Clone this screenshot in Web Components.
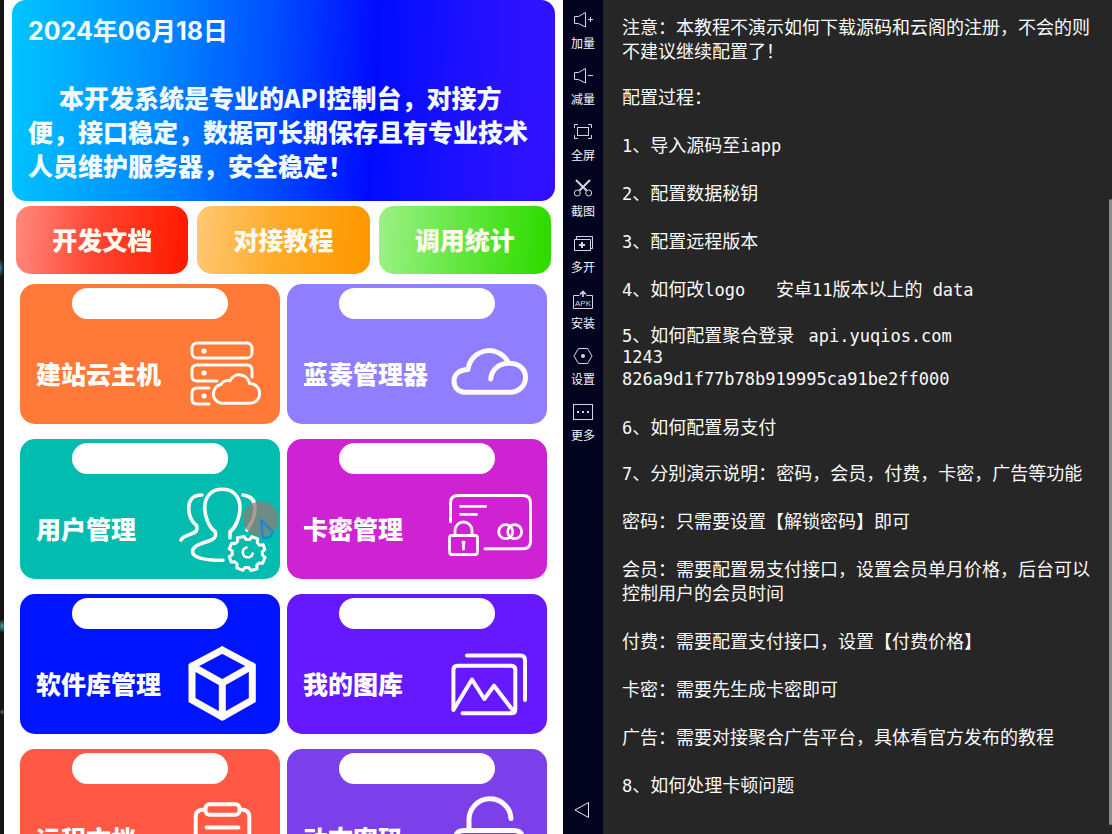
<!DOCTYPE html>
<html lang="zh-CN">
<head>
<meta charset="utf-8">
<meta name="viewport" content="width=device-width, initial-scale=1">
<title>开发控制台</title>
<style>
html, body { margin: 0; height: 100%; overflow: hidden; background: #262626; }
body { font-family: "Noto Sans CJK SC", sans-serif; color: #fff; }
</style>
</head>
<body>
<desk-view>
  <phone-screen slot="phone">
    <notice-banner date="2024年06月18日">本开发系统是专业的API控制台，对接方便，接口稳定，数据可长期保存且有专业技术人员维护服务器，安全稳定！</notice-banner>
    <quick-bar>
      <quick-button style="--from:#ff8a7e;--mid:#ff4634;--to:#ff1c00">开发文档</quick-button>
      <quick-button style="--from:#ffc873;--mid:#ffac2c;--to:#ff9800">对接教程</quick-button>
      <quick-button style="--from:#9bf285;--mid:#66e745;--to:#30dc00">调用统计</quick-button>
    </quick-bar>
    <card-grid>
      <menu-card icon="server" style="--fill:#ff7a38">建站云主机</menu-card>
      <menu-card icon="cloud" style="--fill:#8f7fff">蓝奏管理器</menu-card>
      <menu-card icon="users" style="--fill:#02bcb0">用户管理</menu-card>
      <menu-card icon="card" style="--fill:#cf22d3">卡密管理</menu-card>
      <menu-card icon="cube" style="--fill:#0014ff">软件库管理</menu-card>
      <menu-card icon="gallery" style="--fill:#6619ff">我的图库</menu-card>
      <menu-card icon="clipboard" style="--fill:#ff5845">远程文档</menu-card>
      <menu-card icon="lock" style="--fill:#7b40ea">动态密码</menu-card>
    </card-grid>
  </phone-screen>
  <tool-rail slot="rail">
    <rail-button icon="volup">加量</rail-button>
    <rail-button icon="voldown">减量</rail-button>
    <rail-button icon="full">全屏</rail-button>
    <rail-button icon="cut">截图</rail-button>
    <rail-button icon="multi">多开</rail-button>
    <rail-button icon="apk">安装</rail-button>
    <rail-button icon="set">设置</rail-button>
    <rail-button icon="more">更多</rail-button>
  </tool-rail>
  <note-pane slot="notes"></note-pane>
</desk-view>

<script>
const define = (name, html, setup) => {
  const template = document.createElement('template');
  template.innerHTML = html;
  customElements.define(name, class extends HTMLElement {
    constructor() {
      super();
      this.attachShadow({ mode: 'open' }).append(template.content.cloneNode(true));
    }
    connectedCallback() { if (setup) setup(this, this.shadowRoot); }
  });
};

const cardIcons = {
  server: `<g stroke-width="3"><rect x="13" y="19" width="60" height="15" rx="5"/>
    <path d="M38 57H18q-5 0-5-5v-6q0-5 5-5h50q5 0 5 5v7M30 64H18q-5 0-5 5v6q0 5 5 5h12"/>
    <path d="M42 79.3H71A9.8 9.8 0 0 0 70.5 59.5 A10.3 10.3 0 0 0 51 56.8 A8 8 0 0 0 42 60.5 A9.6 9.6 0 0 0 42 79.3Z"/></g>
    <g class="solid"><circle cx="25" cy="27" r="2.6"/><circle cx="25" cy="49" r="2.6"/><circle cx="25" cy="72" r="2.6"/></g>`,
  cloud: `<path stroke-width="5" d="M19 68.3H64C73 68.3 79.500 61.500 79.500 53.500C79.500 45 73 39.300 63 39.300C53 39.300 45.500 45.500 44.700 55M62.500 39A21.300 21.300 0 0 0 22 45.500C14 45.500 8 50 8 57C8 63.500 12.500 68.300 19 68.300"/>`,
  users: `<g stroke-width="3.6"><path d="M51 59v-6C57 48 61 38 61 29C61 17 54 10.3 43.3 10.3S25.7 17 25.7 29C25.7 38 30 48 36 52.5C38 58 35 60 31 61.5C21 65 13.5 67 13.5 72.5C13.5 77 20 81.3 44 81.3"/>
    <path d="M23 16C13 16 9.7 22 9.7 29C9.7 36 12 42 17.5 46.5C19.5 52 16 53.5 12 55C6 57 3 58.5 2 61M64 16C73 17 76 22 76 29C76 38 73 43 68 51"/></g>
    <g stroke-width="3"><path d="M65.2 57.6l2 3h3.6l2-3 6 2.4-.6 3.6 2.4 2.600 3.600-.4 1.600 4.600-2.600 2.600.3 3.400 2.600 2-2.400 5.800-3.500-.3-2.500 2.400.3 3.600-6 1.600-2.400-3h-3.400l-2.400 2.800-6-2.400.4-3.600-2.400-2.500-3.700.2-1.800-5.200 3-2.300v-3.400l-3-2.300 2.400-5.600 3.700.3 2.400-2.400-.5-3.400z"/>
    <path stroke-width="2.6" d="M67.5 68.5A5 5 0 1 0 73.7 74.5"/></g>
    <circle class="touch" cx="81.7" cy="40" r="17.5"/><path class="cursor" d="M82 41L94 53L91 58L84 59Z"/>`,
  card: `<g stroke-width="2.8"><path stroke-width="3" d="M4.500 42.700V24q0-7.500 7.500-7.500h65q7.500 0 7.500 7.500v38.500q0 7.200-7.500 7.200H39"/>
    <path d="M13.500 27.300H40.700M13.500 35.300H31.700" stroke-linecap="butt"/><rect x="3.500" y="56.500" width="28" height="19" rx="2.500"/>
    <path d="M9 56V51.500a8.500 8.500 0 0 1 17 0V56M17.500 63.500V70"/><circle cx="59.700" cy="52.700" r="7"/><circle cx="68.700" cy="52.700" r="7"/></g>
    <circle class="solid" cx="17.500" cy="63.500" r="2"/>`,
  cube: `<path stroke-width="7" stroke-linejoin="miter" d="M43.300 16L73.300 32V66L43.300 83L13 66V32ZM13 32L43.300 49L73.300 32M43.300 49V83"/>`,
  gallery: `<path stroke-width="4" d="M21 21.500H74.500q4.500 0 4.500 4.500V66M16.500 79.300H65q4.300 0 4.300-4.300V36q0-4.300-4.300-4.300H11.700q-4.300 0-4.300 4.300V76L26 45.500L38.300 65L48 51.700L68.500 78.500"/>`,
  clipboard: `<g stroke-width="4"><rect x="26.500" y="15.300" width="34" height="10.500" rx="4"/>
    <path d="M26 20.500q-9.300 0-9.300 7V95M61 20.500q9.300 0 9.300 7V95M27.500 38.500H59.500"/></g>`,
  lock: `<path stroke-width="5" d="M23 41V32A21 21 0 0 1 65 29.500M18 41.500H68q8.500 0 8.500 8.500V95M18 41.500q-8.500 0-8.500 8.500V95"/>`
};

const railIcons = {
  volup: `<path d="M3.500 9.500V16.500H7.500L14.500 20V5.500L7.500 9.500ZM17 12.500H22M19.500 10V15"/>`,
  voldown: `<path d="M3.500 9.500V16.500H7.500L14.500 20V5.500L7.500 9.500ZM17 12.500H22"/>`,
  full: `<path d="M3.500 9V5.500H7M17 5.500H20.500V9M20.500 16V19.500H17M7 19.500H3.500V16"/><rect x="6.500" y="8.500" width="11" height="8"/>`,
  cut: `<path stroke-width="2" d="M5 5L15.500 15.500M19 5L8.500 15.500"/><circle cx="6.300" cy="18" r="3"/><circle cx="17.700" cy="18" r="3"/>`,
  multi: `<path d="M5.500 8.500V5.500H21.500V17.500H19.500M3.500 8.500H19.500V19.500H3.500Z"/><path stroke-width="2" d="M8 14H14M11 11V17"/>`,
  apk: `<path d="M8.500 8.500H2.500V21.500H21.500V8.500H15.500"/><path stroke-width="1.600" d="M12 10V5M9 7.500L12 4.500L15 7.500"/><text x="12" y="19">APK</text>`,
  set: `<path d="M3 13L7.500 5.500H16.500L21 13L16.500 20.500H7.500Z"/><circle class="solid" cx="12" cy="13" r="2"/>`,
  more: `<rect x="2.500" y="5.500" width="19" height="15"/><path stroke-width="2" d="M6 13H8M11 13H13M16 13H18"/>`
};

define('desk-view', `<style>
  :host { display: grid; grid-template-columns: 4px minmax(0, 559fr) 40px minmax(0, 509fr); height: 100vh; overflow: hidden; }
  .edge { background:
    radial-gradient(4px 10px at 0 268px, #3d7aa0, transparent),
    radial-gradient(4px 7px at 2px 626px, #4fa0a8, transparent),
    radial-gradient(2px 3px at 2px 712px, #777, transparent), #161412; }
  </style><div class="edge"></div><slot name="phone"></slot><slot name="rail"></slot><slot name="notes"></slot>`);

define('phone-screen', `<style>
  :host { display: flex; flex-direction: column; background: #fff; overflow: hidden; min-width: 0; }
  </style><slot></slot>`);

define('notice-banner', `<style>
  :host { display: block; margin: 0 8px; padding: 14px 16px 19px; border-radius: 14px; flex: none;
    background: linear-gradient(93deg, #00c3ff 1%, #0090ff 25%, #0050ff 47%, #000cff 66%, #2a12ff 90%, #3010ff);
    font: 900 25px/34px "Noto Sans CJK SC", sans-serif; color: #f2fbff; }
  h1, p { margin: 0; font: inherit; }
  h1 { font: 700 25px/34px Inter, "Noto Sans CJK SC", sans-serif; }
  p { margin-top: 32px; text-indent: 31px; }
  </style><h1></h1><p><slot></slot></p>`,
  (el, root) => { root.querySelector('h1').textContent = el.getAttribute('date'); });

define('quick-bar', `<style>
  :host { display: grid; grid-template-columns: repeat(3, minmax(0, 1fr)); gap: 9px; padding: 5px 12px 10px; flex: none; }
  </style><slot></slot>`);

define('quick-button', `<style>
  :host { display: block; }
  button { width: 100%; height: 68px; padding: 0 0 2px; border: 0; border-radius: 15px; color: #fffaf0;
    background: linear-gradient(95deg, var(--from), var(--mid) 45%, var(--to) 95%);
    font: 900 25px/34px "Noto Sans CJK SC", sans-serif; }
  </style><button type="button"><slot></slot></button>`);

define('card-grid', `<style>
  :host { display: grid; grid-template-columns: repeat(2, minmax(0, 1fr)); gap: 15px 7px; padding: 0 16px; flex: none; }
  </style><slot></slot>`);

define('menu-card', `<style>
  :host { display: block; }
  button { display: flex; flex-direction: column; align-items: center; gap: 5px; width: 100%; height: 140px;
    padding: 4px 5px 4px 16px; border: 0; border-radius: 15px; background: var(--fill); color: #fff;
    font: 900 25px/34px "Noto Sans CJK SC", sans-serif; text-align: left; }
  .pill { width: 156px; height: 31px; margin-right: 11px; border-radius: 16px; background: #fff; flex: none; }
  .row { display: flex; align-items: center; justify-content: space-between; width: 100%; }
  .label { padding-top: 2px; white-space: nowrap; }
  svg { width: 96px; height: 96px; overflow: visible; fill: none; stroke: #fffaf6; stroke-linecap: round; stroke-linejoin: round; flex: none; }
  .solid { fill: #fff; stroke: none; }
  .touch { fill: #8f7c74; fill-opacity: .75; stroke: none; }
  .cursor { stroke: #1687d8; stroke-width: 2; }
  </style><button type="button"><span class="pill"></span><span class="row"><span class="label"><slot></slot></span><svg viewBox="0 0 96 96" aria-hidden="true"></svg></span></button>`,
  (el, root) => { root.querySelector('svg').innerHTML = cardIcons[el.getAttribute('icon')]; });

define('tool-rail', `<style>
  :host { display: flex; flex-direction: column; background: #03041f; overflow: hidden; }
  .back { margin-top: auto; height: 48px; padding: 0; border: 0; background: none; }
  .back svg { display: block; width: 24px; height: 48px; margin: 0 auto; fill: none; stroke: #e4e6ee; }
  </style><slot></slot><button class="back" type="button" aria-label="返回"><svg viewBox="0 0 24 48"><path d="M17.500 16.500V31.500L4 24Z"/></svg></button>`);

define('rail-button', `<style>
  :host { display: block; }
  button { display: flex; flex-direction: column; align-items: center; gap: 4px; width: 100%; height: 56px;
    padding: 7px 0 5px; border: 0; background: none; color: #f4f4f8; font: 12px/16px "Noto Sans CJK SC", sans-serif; }
  svg { width: 24px; height: 24px; fill: none; stroke: #d2d6e6; stroke-width: 1; flex: none; }
  .solid { fill: #d2d6e6; stroke: none; }
  text { fill: #d2d6e6; stroke: none; font: 8px "Liberation Sans", sans-serif; text-anchor: middle; }
  </style><button type="button"><svg viewBox="0 0 24 24" aria-hidden="true"></svg><span><slot></slot></span></button>`,
  (el, root) => { root.querySelector('svg').innerHTML = railIcons[el.getAttribute('icon')]; });

define('note-pane', `<style>
  :host { display: block; position: relative; padding: 14px 14px 0 19px; background: #262626; overflow: hidden;
    font: 18px/24px "Noto Sans CJK SC", sans-serif; color: #fafafa; text-spacing-trim: space-all; }
  p { margin: 0 0 24px; white-space: pre-wrap; }
  .tight { margin-bottom: 22px; }
  span, code { font: 17px/22px "DejaVu Sans Mono", monospace; }
  span { line-height: 0; }
  code { display: block; }
  .bar { position: absolute; top: 199px; right: 0; bottom: 9px; width: 3px; border-radius: 2px; background: #8c8c8c; }
  </style>
  <p class="tight">注意：本教程不演示如何下载源码和云阁的注册，不会的则不建议继续配置了！</p>
  <p>配置过程：</p>
  <p><span>1</span>、导入源码至<span>iapp</span></p>
  <p><span>2</span>、配置数据秘钥</p>
  <p><span>3</span>、配置远程版本</p>
  <p class="tight"><span>4</span>、如何改<span>logo   </span>安卓<span>11</span>版本以上的<span> data</span></p>
  <p><span>5</span>、如何配置聚合登录 <span> api.yuqios.com</span><code>1243</code><code>826a9d1f77b78b919995ca91be2ff000</code></p>
  <p class="tight"><span>6</span>、如何配置易支付</p>
  <p><span>7</span>、分别演示说明：密码，会员，付费，卡密，广告等功能</p>
  <p>密码：只需要设置【解锁密码】即可</p>
  <p>会员：需要配置易支付接口，设置会员单月价格，后台可以控制用户的会员时间</p>
  <p>付费：需要配置支付接口，设置【付费价格】</p>
  <p>卡密：需要先生成卡密即可</p>
  <p>广告：需要对接聚合广告平台，具体看官方发布的教程</p>
  <p><span>8</span>、如何处理卡顿问题</p>
  <div class="bar"></div>`);
</script>
</body>
</html>
